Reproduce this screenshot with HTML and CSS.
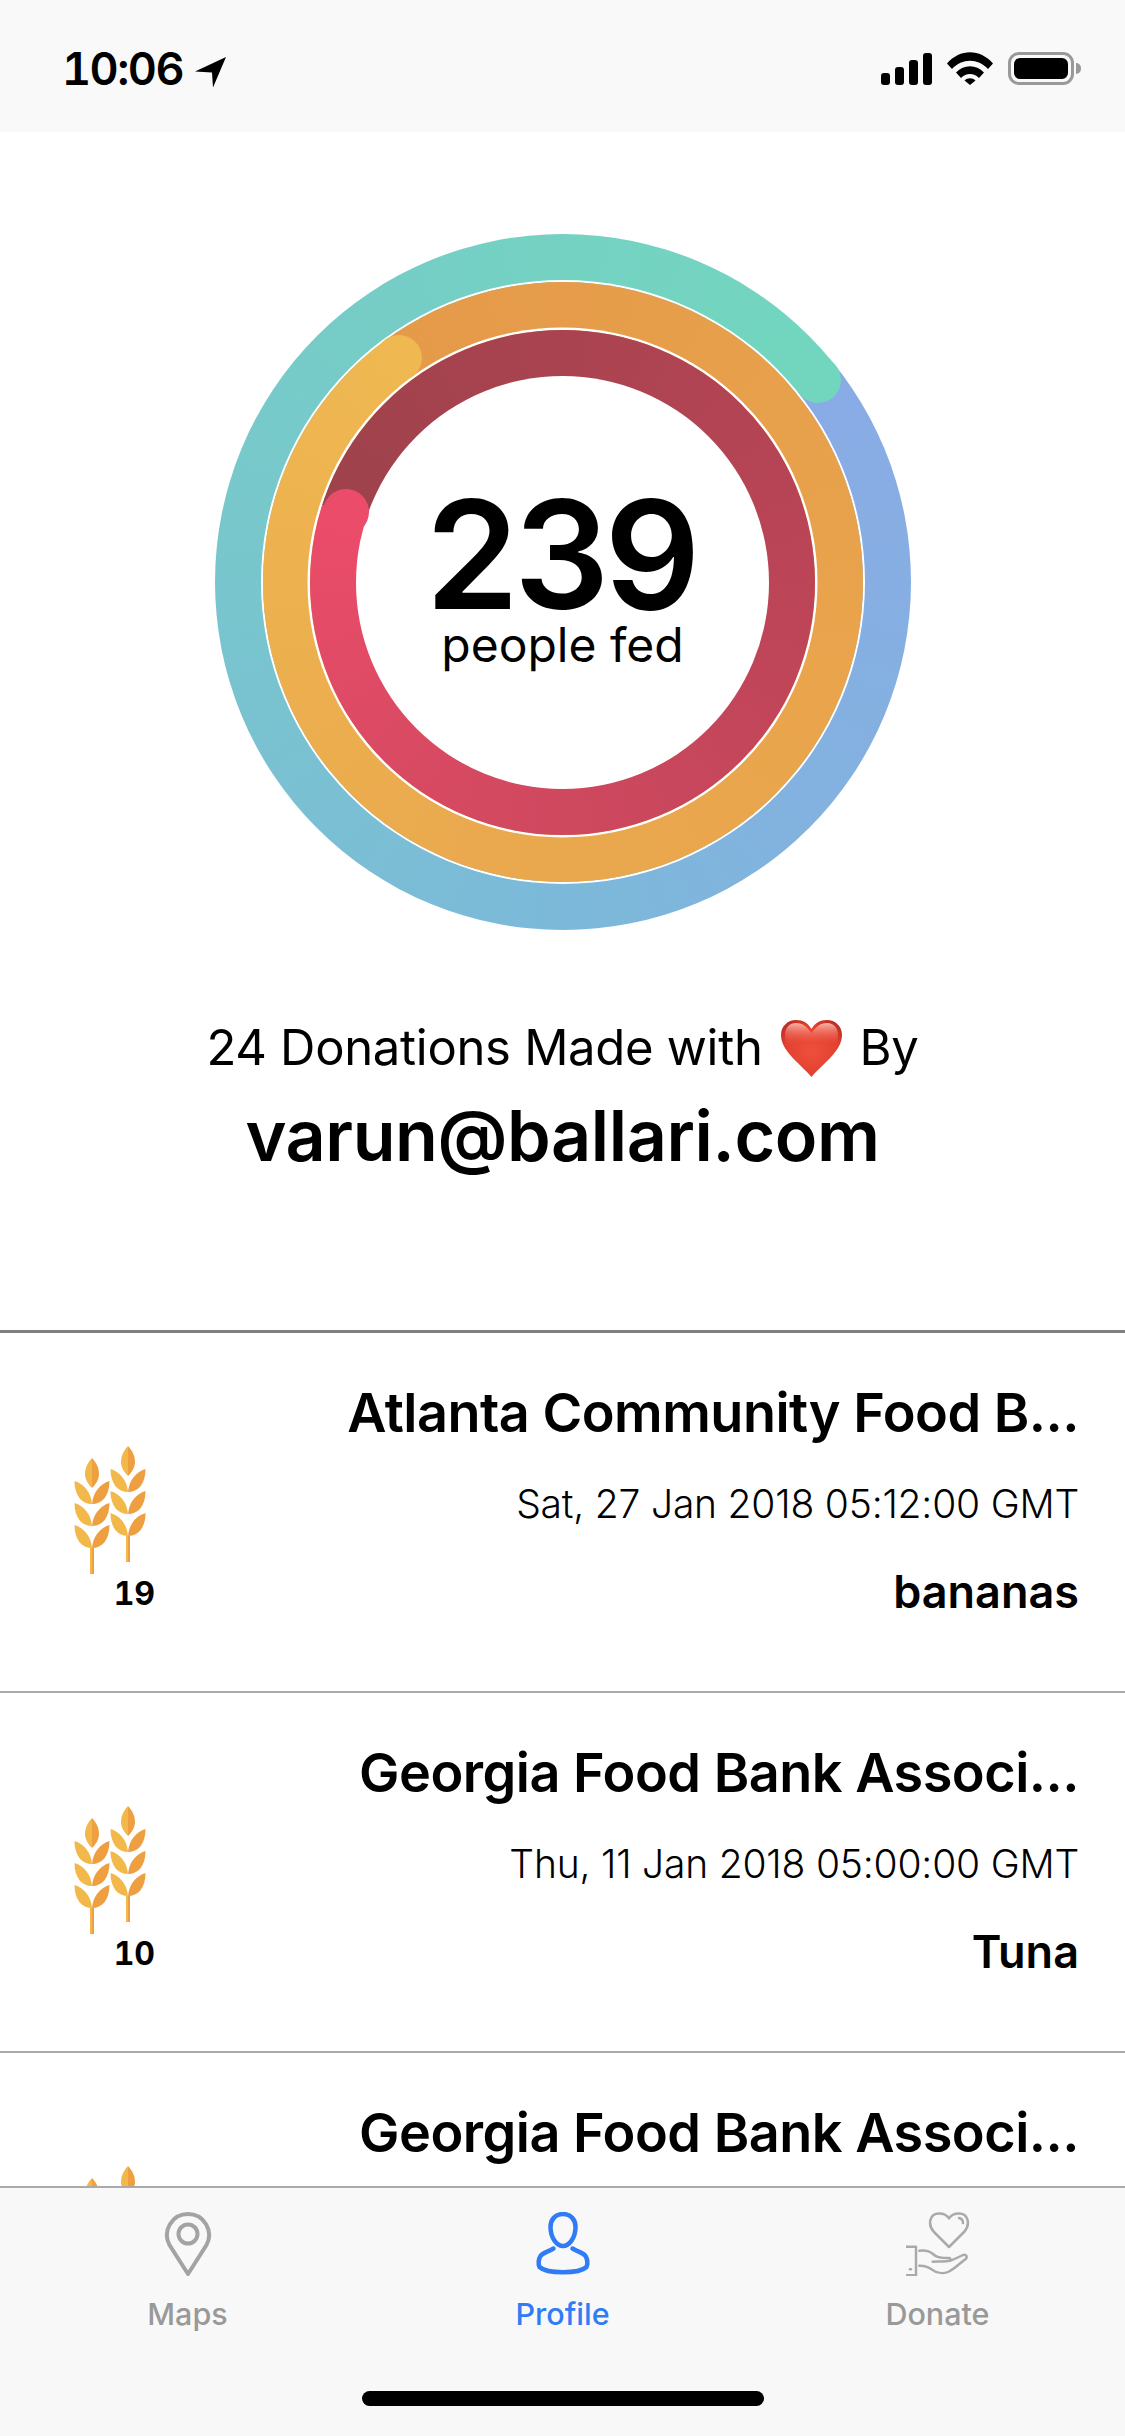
FILE: index.html
```html
<!DOCTYPE html>
<html lang="en">
<head>
    <meta charset="UTF-8">
    <meta name="viewport" content="width=device-width, initial-scale=1.0">
    <title>Profile</title>
    <link rel="stylesheet" href="styles.css">
</head>
<body>

<svg class="defs" width="0" height="0">
    <symbol id="ear" viewBox="-18 0 36 116">
        <path class="leaf-l" d="M0 0C-5 5-7 11-7 16C-7 22-3 27 0 30Z"/>
        <path class="leaf-r" d="M0 0C5 5 7 11 7 16C7 22 3 27 0 30Z"/>
        <g id="pair">
            <path class="leaf-l" d="M-17.500 23C-8 26-1 34 0 46C-10 46-17.500 38-17.500 23Z"/>
            <path class="leaf-r" d="M17.500 23C8 26 1 34 0 46C10 46 17.500 38 17.500 23Z"/>
        </g>
        <use href="#pair" y="22"/>
        <use href="#pair" y="44"/>
        <rect class="leaf-l" x="-2" y="90" width="2" height="26"/>
        <rect class="leaf-r" x="0" y="90" width="2" height="26"/>
    </symbol>
    <symbol id="wheat" viewBox="0 0 72 128">
        <use href="#ear" x="0" y="12" width="36" height="116"/>
        <use href="#ear" x="36" y="0" width="36" height="116"/>
    </symbol>
</svg>

<div class="status-bar">
    <div class="status-left">
        <span class="clock">10:06</span>
        <svg class="arrow" width="32" height="31" viewBox="0 0 32 31"><path d="M31 0L0 14.500L17 15.500L18 30.500Z"/></svg>
    </div>
    <div class="status-right">
        <div class="signal">
            <span class="bar bar-1"></span>
            <span class="bar bar-2"></span>
            <span class="bar bar-3"></span>
            <span class="bar bar-4"></span>
        </div>
        <svg class="wifi" width="46" height="33" viewBox="0 0 46 33">
            <path d="M0 11.500C13 -3.500 33 -3.500 46 11.500L41 17C31 6 15 6 5 17Z"/>
            <path d="M9 20.500C17 12 29 12 37 20.500L32 26C27 20.500 19 20.500 14 26Z"/>
            <path d="M17.500 28.500C20.500 25.500 25.500 25.500 28.500 28.500L23 33Z"/>
        </svg>
        <div class="battery">
            <div class="battery-body"><div class="battery-fill"></div></div>
            <div class="battery-nub"></div>
        </div>
    </div>
</div>

<div class="hero">
    <div class="rings">
        <div class="ring ring-outer">
            <div class="ring ring-mid">
                <div class="ring ring-inner">
                    <div class="ring-center">
                        <div class="fed-count">239</div>
                        <div class="fed-label">people fed</div>
                    </div>
                </div>
            </div>
        </div>
        <div class="cap cap-outer"></div>
        <div class="cap cap-mid"></div>
        <div class="cap cap-inner"></div>
    </div>
    <div class="made-with">
        <span>24 Donations Made with</span>
        <svg class="heart" width="61" height="57" viewBox="0 0 61 57">
            <defs>
                <radialGradient id="heartFill" cx="50%" cy="55%" r="65%">
                    <stop offset="0%" stop-color="#ee4f3c"/>
                    <stop offset="70%" stop-color="#e2402f"/>
                    <stop offset="100%" stop-color="#b92a20"/>
                </radialGradient>
                <linearGradient id="heartShine" x1="0" y1="0" x2="0" y2="1">
                    <stop offset="0%" stop-color="#f9bcb0" stop-opacity="0.95"/>
                    <stop offset="100%" stop-color="#ee4f3c" stop-opacity="0"/>
                </linearGradient>
            </defs>
            <path fill="url(#heartFill)" d="M30.500 57C22 46 0 32 0 15C0 6 7 0 15 0C22 0 27 3 30.500 9C34 3 39 0 46 0C54 0 61 6 61 15C61 32 39 46 30.500 57Z"/>
            <path fill="url(#heartShine)" d="M15 3C8 3 4 8 4 15C4 19 5 22 7 25C22 20 39 20 54 25C56 22 57 19 57 15C57 8 53 3 46 3C39 3 35 7 30.500 13C26 7 22 3 15 3Z"/>
        </svg>
        <span>By</span>
    </div>
    <div class="email">varun@ballari.com</div>
</div>

<div class="donations">
    <div class="donation">
        <div class="amount">
            <svg class="wheat-icon"><use href="#wheat"/></svg>
            <div class="amount-num">19</div>
        </div>
        <div class="details">
            <div class="bank">Atlanta Community Food B...</div>
            <div class="date">Sat, 27 Jan 2018 05:12:00 GMT</div>
            <div class="item">bananas</div>
        </div>
    </div>
    <div class="donation">
        <div class="amount">
            <svg class="wheat-icon"><use href="#wheat"/></svg>
            <div class="amount-num">10</div>
        </div>
        <div class="details">
            <div class="bank">Georgia Food Bank Associ...</div>
            <div class="date">Thu, 11 Jan 2018 05:00:00 GMT</div>
            <div class="item">Tuna</div>
        </div>
    </div>
    <div class="donation">
        <div class="amount">
            <svg class="wheat-icon"><use href="#wheat"/></svg>
        </div>
        <div class="details">
            <div class="bank">Georgia Food Bank Associ...</div>
        </div>
    </div>
</div>

<div class="tab-bar">
    <div class="tabs">
        <div class="tab">
            <svg class="tab-icon" width="64" height="64" viewBox="0 0 64 64">
                <path d="M32 62L13.500 33C6 19 16 2 32 2C48 2 58 19 50.500 33Z"/>
                <circle cx="32" cy="22" r="9.500"/>
            </svg>
            <span>Maps</span>
        </div>
        <div class="tab tab-active">
            <svg class="tab-icon" width="64" height="64" viewBox="0 0 64 64">
                <path d="M32 2C40 2 44.500 8 44.500 15C44.500 26 38 34 32 34C26 34 19.500 26 19.500 15C19.500 8 24 2 32 2Z"/>
                <path d="M22.500 36.500C17 40 12 40.500 9.500 44C7.500 47 7 52 8.500 55C16 62 48 62 55.500 55C57 52 56.500 47 54.500 44C52 40.500 47 40 41.500 36.500"/>
            </svg>
            <span>Profile</span>
        </div>
        <div class="tab">
            <svg class="tab-icon" width="64" height="64" viewBox="0 0 64 64">
                <path d="M43 35L28 20C21 12 24 1.500 33 1.500C38 1.500 41 3 43 6.500C45 3 48 1.500 53 1.500C62 1.500 65 12 58 20Z"/>
                <path d="M53 6C55.500 6.500 57 8.500 57 11"/>
                <path d="M0 34.700H10V63.300H0"/>
                <path d="M4 57.300H4.800"/>
                <path d="M13.300 38.700C18 38 23 38.500 27 42C30 45 33 46 43 46C45.500 47 44.500 49 42 49C38 49.500 31 49.500 26.700 49.700"/>
                <path d="M13.300 53.700C18 53.500 21 54 25 57C31 61.500 38 62 43 59.500C48 57 53 52 59 47.500C62.500 45 60 41.500 56 43.500C52 45.500 48 47.500 44 48.700"/>
            </svg>
            <span>Donate</span>
        </div>
    </div>
    <div class="home-indicator"></div>
</div>

</body>
</html>
```

FILE: styles.css
```css
html, body {
    margin: 0;
    padding: 0;
}
body {
    width: 1125px;
    height: 2436px;
    overflow: hidden;
    display: flex;
    flex-direction: column;
    background-color: white;
    color: black;
    font-family: Inter, "Liberation Sans", sans-serif;
}
.defs {
    position: absolute;
}
.leaf-l {
    fill: #f2b84a;
}
.leaf-r {
    fill: #ee9f40;
}

/* status bar */
.status-bar {
    height: 132px;
    flex-shrink: 0;
    box-sizing: border-box;
    padding: 52px 44px 0 62px;
    display: flex;
    justify-content: space-between;
    align-items: flex-start;
    background-color: #f9f9f9;
}
.status-left {
    display: flex;
    align-items: flex-start;
}
.clock {
    font-size: 45px;
    font-weight: 600;
    line-height: 34px;
    letter-spacing: -1.500px;
    font-variant-numeric: tabular-nums;
}
.arrow {
    margin: 5px 0 0 12px;
}
.status-right {
    display: flex;
    align-items: flex-start;
}
.signal {
    display: flex;
    align-items: flex-end;
    gap: 5px;
    height: 33px;
}
.bar {
    width: 9px;
    background-color: black;
    border-radius: 3px;
}
.bar-1 { height: 12px; }
.bar-2 { height: 18px; }
.bar-3 { height: 25px; }
.bar-4 { height: 32px; }
.wifi {
    margin-left: 15px;
}
.battery {
    display: flex;
    align-items: center;
    margin-left: 15px;
}
.battery-body {
    width: 66px;
    height: 33px;
    box-sizing: border-box;
    padding: 3px;
    border: 3px solid #999;
    border-radius: 11px;
}
.battery-fill {
    height: 100%;
    background-color: black;
    border-radius: 6px;
}
.battery-nub {
    width: 5px;
    height: 11px;
    margin-left: 2px;
    background-color: #999;
    border-radius: 0 5px 5px 0;
}

/* rings */
.hero {
    height: 1201px;
    flex-shrink: 0;
    box-sizing: border-box;
    padding-top: 102px;
    display: flex;
    flex-direction: column;
    align-items: center;
    border-bottom: 3px solid #808080;
}
.rings {
    position: relative;
    width: 696px;
    height: 696px;
    flex-shrink: 0;
}
.ring {
    display: flex;
    justify-content: center;
    align-items: center;
    border-radius: 50%;
}
.ring-outer {
    width: 696px;
    height: 696px;
    background: conic-gradient(from 51.6deg, #8aabe6, #82b2df 23%, #7cb9d9 36%, #78c6cd 61%, #74d2c2 86%, #72d6be);
}
.ring-mid {
    width: 600px;
    height: 600px;
    box-shadow: 0 0 0 2px white;
    background: conic-gradient(from 323.8deg, #e59a4a, #e9a44c 40%, #eaa94e 65%, #edb14f 85%, #efb851);
}
.ring-inner {
    width: 505px;
    height: 505px;
    box-shadow: 0 0 0 2.500px white;
    background: conic-gradient(from 288deg, #9e424c, #a8434f 18%, #bf4558 50%, #d34960 75%, #eb4c6a);
}
.ring-center {
    width: 413px;
    height: 413px;
    box-sizing: border-box;
    padding-top: 3px;
    display: flex;
    flex-direction: column;
    align-items: center;
    justify-content: center;
    border-radius: 50%;
    background-color: white;
}
.cap {
    position: absolute;
    width: 46px;
    height: 46px;
    border-radius: 50%;
}
.cap-outer {
    left: 580px;
    top: 123px;
    background-color: #72d6be;
}
.cap-mid {
    left: 161px;
    top: 101px;
    background-color: #efb851;
}
.cap-inner {
    left: 108px;
    top: 255px;
    background-color: #eb4c6a;
}
.fed-count {
    padding-right: 4px;
    font-size: 150px;
    font-weight: 600;
    line-height: 122px;
    letter-spacing: -5px;
}
.fed-label {
    font-size: 48px;
    line-height: 58px;
}

/* who donated */
.made-with {
    margin-top: 88px;
    display: flex;
    align-items: center;
    gap: 18px;
    font-size: 49px;
    line-height: 60px;
    letter-spacing: -0.300px;
}
.heart {
    flex-shrink: 0;
}
.email {
    margin-top: 16px;
    font-size: 70px;
    font-weight: 600;
    line-height: 84px;
    letter-spacing: -0.400px;
}

/* donation list */
.donations {
    flex: 1;
    overflow: hidden;
}
.donation {
    height: 360px;
    box-sizing: border-box;
    display: flex;
    justify-content: space-between;
    padding: 0 46px 0 74px;
    border-bottom: 2px solid #aaa;
}
.amount {
    padding-top: 113px;
    width: 81px;
    flex-shrink: 0;
}
.wheat-icon {
    display: block;
    width: 72px;
    height: 128px;
}
.amount-num {
    margin-top: 2px;
    text-align: right;
    font-size: 32px;
    font-weight: 700;
    line-height: 36px;
    font-variant-numeric: tabular-nums;
}
.details {
    padding-top: 47px;
    text-align: right;
}
.bank {
    font-size: 54px;
    font-weight: 600;
    line-height: 66px;
    letter-spacing: -0.500px;
}
.date {
    margin-top: 34px;
    font-size: 39px;
    font-weight: 300;
    line-height: 48px;
    letter-spacing: -0.200px;
}
.item {
    margin-top: 36px;
    font-size: 45px;
    font-weight: 600;
    line-height: 56px;
}

/* tab bar */
.tab-bar {
    height: 250px;
    flex-shrink: 0;
    box-sizing: border-box;
    position: relative;
    z-index: 1;
    display: flex;
    flex-direction: column;
    align-items: center;
    background-color: #f8f8f8;
    border-top: 2px solid #aaa;
}
.tabs {
    width: 100%;
    display: grid;
    grid-template-columns: repeat(3, 1fr);
    padding-top: 24px;
}
.tab {
    display: flex;
    flex-direction: column;
    align-items: center;
    gap: 20px;
    color: #999;
    font-size: 30.500px;
    font-weight: 500;
    line-height: 36px;
}
.tab-icon {
    fill: none;
    stroke: #a3a3a3;
    stroke-width: 4;
    stroke-linecap: round;
    stroke-linejoin: round;
}
.tab:last-child .tab-icon {
    stroke-width: 2.500;
    stroke: #aaa;
}
.tab-active {
    color: #2f7cf6;
}
.tab-active .tab-icon {
    stroke: #2f7cf6;
    stroke-width: 4.500;
}
.home-indicator {
    width: 402px;
    height: 15px;
    margin-top: 59px;
    background-color: black;
    border-radius: 8px;
}
```
